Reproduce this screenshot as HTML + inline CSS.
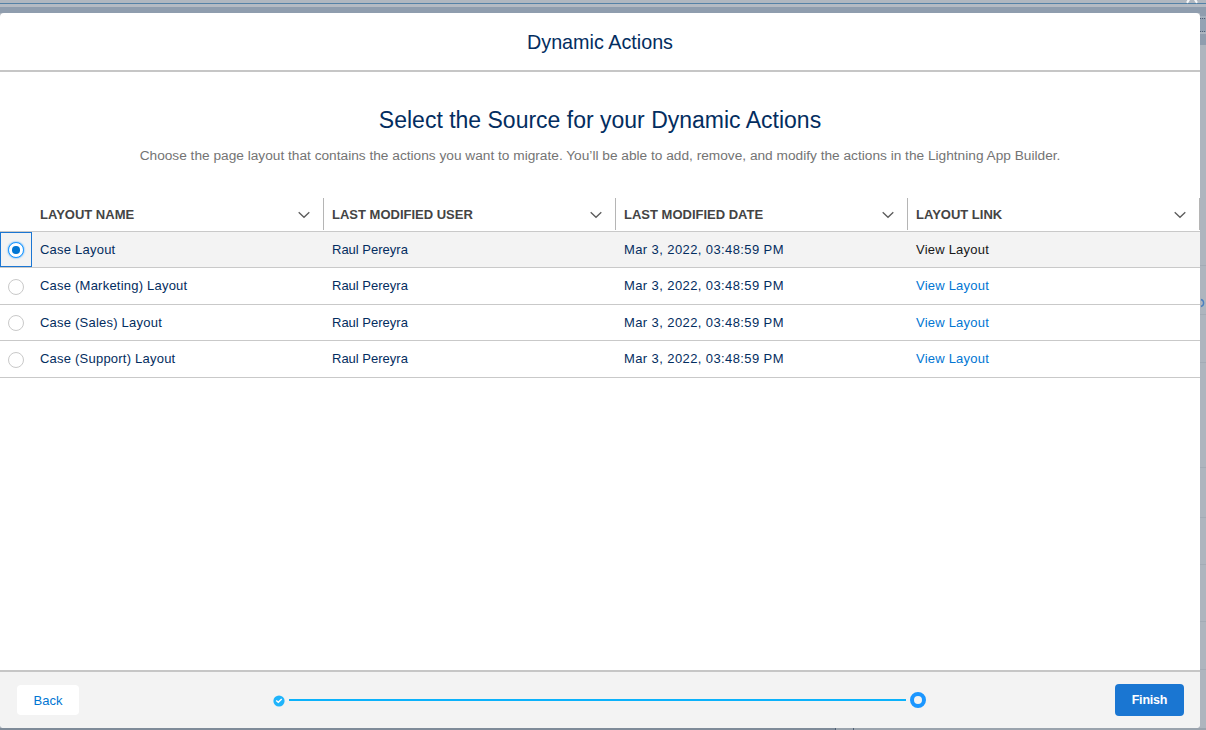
<!DOCTYPE html>
<html>
<head>
<meta charset="utf-8">
<style>
*{box-sizing:border-box;margin:0;padding:0}
html,body{width:1206px;height:730px;overflow:hidden}
body{position:relative;background:#aeb5be;font-family:"Liberation Sans",sans-serif;color:#181818}
.abs{position:absolute}
#modal{position:absolute;left:0;top:13px;width:1200px;height:715px;background:#fff;border-radius:4px;overflow:hidden}
#hdr{position:absolute;left:0;top:0;width:1200px;height:59px;border-bottom:2px solid #c6c6c6}
#title{position:absolute;left:0;width:1200px;top:17px;text-align:center;font-size:19.75px;line-height:24px;color:#032d60}
#headline{position:absolute;left:0;width:1200px;top:93px;text-align:center;font-size:23px;line-height:28px;color:#032d60}
#sub{position:absolute;left:0;width:1200px;top:134px;text-align:center;font-size:13.7px;line-height:18px;color:#747474}
.th{position:absolute;top:185px;height:34px;font-weight:700;font-size:13px;color:#444444;line-height:34px}
.chev{position:absolute;top:198px;width:12px;height:8px}
.div{position:absolute;top:185px;width:1px;height:32px;background:#b5b5b5}
.rowline{position:absolute;left:0;width:1200px;height:1px;background:#c9c9c9}
.cell{position:absolute;font-size:13px;letter-spacing:0.22px;color:#032d60;line-height:16px;white-space:nowrap}
.date{letter-spacing:0.4px}
.link{color:#0176d3}
.radio{position:absolute;left:8px;width:16px;height:16px;border-radius:50%;border:1px solid #c9c9c9;background:#fff}
#footer{position:absolute;left:0;top:657px;width:1200px;height:58px;background:#f3f3f3;border-top:2px solid #c6c6c6}
#back{position:absolute;left:17px;top:13px;width:62px;height:30px;background:#fff;border-radius:4px;color:#0176d3;font-size:13px;line-height:32px;text-align:center}
#finish{position:absolute;left:1115px;top:12px;width:69px;height:32px;background:#1a76d2;border-radius:4px;color:#fff;font-size:12.5px;font-weight:700;letter-spacing:-0.2px;line-height:33px;text-align:center}
</style>
</head>
<body>
<!-- backdrop top strip -->
<div class="abs" style="left:0;top:0;width:1206px;height:3px;background:#b0b7c0"></div>
<div class="abs" style="left:0;top:3px;width:1206px;height:1px;background:#5481a6"></div>
<div class="abs" style="left:0;top:4px;width:1206px;height:3px;background:#b4bac3"></div>
<div class="abs" style="left:0;top:7px;width:1206px;height:6px;background:#8f9dae"></div>
<!-- right strip -->
<div class="abs" style="left:1200px;top:13px;width:6px;height:32px;background:#8f9dae"></div>
<div class="abs" style="left:1200px;top:16px;width:6px;height:2px;background:#a3afbc"></div>
<div class="abs" style="left:1200px;top:18px;width:6px;height:1px;background:repeating-linear-gradient(90deg,#4f5f75 0 1px,transparent 1px 2px)"></div>
<div class="abs" style="left:1200px;top:19px;width:6px;height:12px;background:#93a2b3"></div>
<div class="abs" style="left:1200px;top:31px;width:6px;height:1px;background:repeating-linear-gradient(90deg,#4f5f75 0 1px,transparent 1px 2px)"></div>
<div class="abs" style="left:1200px;top:32px;width:6px;height:2px;background:#aab4bf"></div>
<svg class="abs" style="left:1184px;top:0" width="16" height="4" viewBox="0 0 16 4"><path d="M7 -4 L3.5 2 M9 -4 L12.5 2" stroke="#fff" stroke-width="2.2" stroke-linecap="round" opacity="0.9"/></svg>
<div class="abs" style="left:1200px;top:45px;width:6px;height:685px;background:#aeb5be"></div>
<div class="abs" style="left:0;top:728px;width:1206px;height:2px;background:#7f8b99"></div>
<div class="abs" style="left:836px;top:728px;width:370px;height:2px;background:#9aa3ad"></div>
<div class="abs" style="left:835px;top:728px;width:1px;height:2px;background:#4f5f75"></div>
<div class="abs" style="left:853px;top:728px;width:1px;height:2px;background:#4f5f75"></div>
<div class="abs" style="left:1200px;top:265px;width:6px;height:1px;background:#a3abb5"></div>
<div class="abs" style="left:1200px;top:314px;width:6px;height:1px;background:#a3abb5"></div>
<div class="abs" style="left:1200px;top:362px;width:6px;height:1px;background:#a3abb5"></div>
<div class="abs" style="left:1200px;top:467px;width:6px;height:1px;background:#a3abb5"></div>
<div class="abs" style="left:1200px;top:517px;width:6px;height:1px;background:#a3abb5"></div>
<div class="abs" style="left:1200px;top:564px;width:6px;height:1px;background:#a3abb5"></div>
<div class="abs" style="left:1200px;top:621px;width:6px;height:1px;background:#a3abb5"></div>
<div class="abs" style="left:1200px;top:669px;width:6px;height:1px;background:#a3abb5"></div>
<svg class="abs" style="left:1196px;top:298px" width="10" height="10" viewBox="0 0 10 10"><path d="M5 1.5 A3.4 3.6 0 0 1 5 8.5" fill="none" stroke="#4a7fc0" stroke-width="1.4"/></svg>

<div id="modal">
  <div id="hdr"><div id="title">Dynamic Actions</div></div>
  <div id="headline">Select the Source for your Dynamic Actions</div>
  <div id="sub">Choose the page layout that contains the actions you want to migrate. You’ll be able to add, remove, and modify the actions in the Lightning App Builder.</div>

  <!-- table header -->
  <div class="th" style="left:40px">LAYOUT NAME</div>
  <div class="th" style="left:332px">LAST MODIFIED USER</div>
  <div class="th" style="left:624px">LAST MODIFIED DATE</div>
  <div class="th" style="left:916px">LAYOUT LINK</div>
  <svg class="chev" style="left:298px" viewBox="0 0 12 8"><path d="M0.7 1.2 L6 6.3 L11.3 1.2" fill="none" stroke="#5c5c5c" stroke-width="1.3"/></svg>
  <svg class="chev" style="left:590px" viewBox="0 0 12 8"><path d="M0.7 1.2 L6 6.3 L11.3 1.2" fill="none" stroke="#5c5c5c" stroke-width="1.3"/></svg>
  <svg class="chev" style="left:882px" viewBox="0 0 12 8"><path d="M0.7 1.2 L6 6.3 L11.3 1.2" fill="none" stroke="#5c5c5c" stroke-width="1.3"/></svg>
  <svg class="chev" style="left:1174px" viewBox="0 0 12 8"><path d="M0.7 1.2 L6 6.3 L11.3 1.2" fill="none" stroke="#5c5c5c" stroke-width="1.3"/></svg>
  <div class="div" style="left:323px"></div>
  <div class="div" style="left:615px"></div>
  <div class="div" style="left:907px"></div>
  <div class="div" style="left:1199px"></div>

  <!-- rows -->
  <div class="abs" style="left:0;top:219px;width:1200px;height:35px;background:#f3f3f3"></div>
  <div class="rowline" style="top:218px"></div>
  <div class="rowline" style="top:254px"></div>
  <div class="rowline" style="top:291px"></div>
  <div class="rowline" style="top:327px"></div>
  <div class="rowline" style="top:364px"></div>

  <div class="abs" style="left:0;top:219px;width:32px;height:35px;border:1px solid #1b76d3"></div>
  <div class="radio" style="top:229px;border-color:#1b96ff;box-shadow:0 0 2px #1b96ff"><div class="abs" style="left:3.2px;top:3.2px;width:7.6px;height:7.6px;border-radius:50%;background:#0176d3"></div></div>
  <div class="radio" style="top:266px"></div>
  <div class="radio" style="top:302px"></div>
  <div class="radio" style="top:339px"></div>

  <div class="cell" style="left:40px;top:229px">Case Layout</div>
  <div class="cell" style="letter-spacing:0;left:332px;top:229px">Raul Pereyra</div>
  <div class="cell date" style="left:624px;top:229px">Mar 3, 2022, 03:48:59 PM</div>
  <div class="cell" style="left:916px;top:229px;color:#181818">View Layout</div>

  <div class="cell" style="left:40px;top:265px">Case (Marketing) Layout</div>
  <div class="cell" style="letter-spacing:0;left:332px;top:265px">Raul Pereyra</div>
  <div class="cell date" style="left:624px;top:265px">Mar 3, 2022, 03:48:59 PM</div>
  <div class="cell link" style="left:916px;top:265px">View Layout</div>

  <div class="cell" style="left:40px;top:302px">Case (Sales) Layout</div>
  <div class="cell" style="letter-spacing:0;left:332px;top:302px">Raul Pereyra</div>
  <div class="cell date" style="left:624px;top:302px">Mar 3, 2022, 03:48:59 PM</div>
  <div class="cell link" style="left:916px;top:302px">View Layout</div>

  <div class="cell" style="left:40px;top:338px">Case (Support) Layout</div>
  <div class="cell" style="letter-spacing:0;left:332px;top:338px">Raul Pereyra</div>
  <div class="cell date" style="left:624px;top:338px">Mar 3, 2022, 03:48:59 PM</div>
  <div class="cell link" style="left:916px;top:338px">View Layout</div>

  <div id="footer">
    <div id="back">Back</div>
    <svg class="abs" style="left:273px;top:23px" width="12" height="12" viewBox="0 0 12 12"><circle cx="6" cy="6" r="5.6" fill="#1fb4fb"/><path d="M3.2 5.4 L5.3 7.3 L8.7 3.9" fill="none" stroke="#fff" stroke-width="1.35"/></svg>
    <div class="abs" style="left:289px;top:27px;width:617px;height:2px;background:#0bb2fb"></div>
    <div class="abs" style="left:910px;top:20px;width:16px;height:16px;border-radius:50%;border:4px solid #1b96ff"></div>
    <div id="finish">Finish</div>
  </div>
</div>
</body>
</html>
